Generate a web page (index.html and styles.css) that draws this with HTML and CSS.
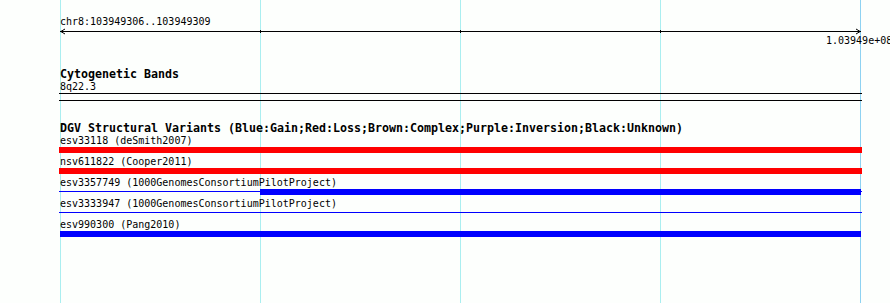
FILE: index.html
```html
<!DOCTYPE html>
<html lang="en">
<head>
    <meta charset="UTF-8">
    <meta name="viewport" content="width=device-width, initial-scale=1.0">
    <title>chr8:103949306..103949309</title>
    <link rel="stylesheet" href="styles.css">
</head>
<body>
    <div class="panel">

        <!-- Ruler -->
        <div class="ruler">
            <div class="ruler-title">chr8:103949306..103949309</div>
            <svg class="ruler-axis" width="803" height="7" viewBox="0 0 803 7">
                <path d="M0 3.5H801M200.5 2V5M400.5 2V5M600.5 2V5" stroke="#000" stroke-width="1" fill="none"/>
                <path d="M5 1L0.8 3.5L5 6M796 1L800.2 3.5L796 6" stroke="#000" stroke-width="1" fill="none"/>
            </svg>
            <div class="ruler-label" style="margin-left: 766px">1.03949e+08</div>
        </div>

        <!-- Cytogenetic Bands -->
        <div class="track track-cyto">
            <div class="track-title">Cytogenetic Bands</div>
            <div class="band-label">8q22.3</div>
            <div class="band"></div>
        </div>

        <!-- DGV Structural Variants -->
        <div class="track track-dgv">
            <div class="track-title">DGV Structural Variants (Blue:Gain;Red:Loss;Brown:Complex;Purple:Inversion;Black:Unknown)</div>

            <div class="feature">
                <div class="feature-label">esv33118 (deSmith2007)</div>
                <div class="lane">
                    <span class="seg seg-loss" style="margin-left: 0; width: 803px"></span>
                </div>
            </div>

            <div class="feature">
                <div class="feature-label">nsv611822 (Cooper2011)</div>
                <div class="lane">
                    <span class="seg seg-loss" style="margin-left: 0; width: 803px"></span>
                </div>
            </div>

            <div class="feature">
                <div class="feature-label">esv3357749 (1000GenomesConsortiumPilotProject)</div>
                <div class="lane">
                    <span class="seg seg-line" style="margin-left: 0; width: 201px"></span>
                    <span class="seg seg-gain" style="width: 601px"></span>
                    <span class="seg seg-line" style="width: 1px"></span>
                </div>
            </div>

            <div class="feature">
                <div class="feature-label">esv3333947 (1000GenomesConsortiumPilotProject)</div>
                <div class="lane">
                    <span class="seg seg-line" style="margin-left: 0; width: 803px"></span>
                </div>
            </div>

            <div class="feature">
                <div class="feature-label">esv990300 (Pang2010)</div>
                <div class="lane">
                    <span class="seg seg-gain" style="margin-left: 1px; width: 801px"></span>
                </div>
            </div>
        </div>

    </div>
</body>
</html>
```

FILE: styles.css
```css
body {
    margin: 0;
    background-color: #fdfffd;
}
.panel {
    width: 890px;
    height: 303px;
    box-sizing: border-box;
    padding: 16px 0 0 60px;
    overflow: hidden;
    font: 10px/11px "DejaVu Sans Mono", monospace;
    color: #000;
    background-color: #fdfffd;
    /* grid lines */
    background-image:
        linear-gradient(#aaeef0, #aaeef0),
        linear-gradient(#aaeef0, #aaeef0),
        linear-gradient(#aaeef0, #aaeef0),
        linear-gradient(#aaeef0, #aaeef0),
        linear-gradient(#8ed2f2, #8ed2f2);
    background-size: 1px 100%;
    background-repeat: no-repeat;
    background-position: 60px 0, 260px 0, 460px 0, 660px 0, 860px 0;
}
.ruler-title {
    height: 11px;
    white-space: nowrap;
}
.ruler-axis {
    display: block;
    margin-top: 1px;
}
.ruler-label {
    height: 11px;
    white-space: nowrap;
}
.track-title {
    font-weight: bold;
    font-size: 11.63px;
    line-height: 12px;
    height: 12px;
    white-space: nowrap;
}
.track-cyto {
    margin-top: 22px;
}
.band-label {
    margin-top: 1px;
    height: 11px;
}
.band {
    margin: 1px 0 0 -1px;
    width: 803px;
    height: 6px;
    border-top: 1px solid #000;
    border-bottom: 1px solid #000;
}
.track-dgv {
    margin-top: 21px;
}
.feature {
    height: 21px;
}
.track-dgv .track-title {
    margin-bottom: 1px;
}
.feature-label {
    height: 11px;
    white-space: nowrap;
}
.lane {
    display: flex;
    align-items: flex-start;
    margin: 1px 0 0 -1px;
    height: 6px;
}
.seg {
    display: block;
    height: 6px;
    flex-shrink: 0;
}
.seg-loss {
    background-color: #ff0000;
}
.seg-gain {
    background-color: #0000ff;
}
.seg-line {
    height: 1px;
    margin-top: 2px;
    background-color: #0000ff;
}
```
